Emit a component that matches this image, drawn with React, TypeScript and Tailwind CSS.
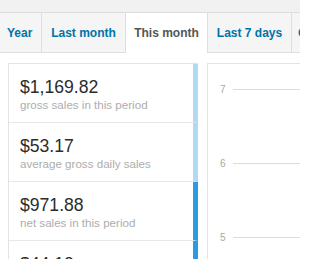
const tabs = [
  { label: "Year", w: "w-[42px]", pad: "pl-[7px]", active: false },
  { label: "Last month", w: "w-[84px]", pad: "justify-center", active: false },
  { label: "This month", w: "w-[82px]", pad: "justify-center", active: true },
  { label: "Last 7 days", w: "w-[84px]", pad: "justify-center", active: false },
  { label: "Custom:", w: "w-[90px]", pad: "pl-[6px]", active: false },
];

const legend = [
  { amount: "$1,169.82", label: "gross sales in this period", bar: "border-r-[#b1d9f1]" },
  { amount: "$53.17", label: "average gross daily sales", bar: "border-r-[#b1d9f1]" },
  { amount: "$971.88", label: "net sales in this period", bar: "border-r-[#2a9be4]" },
  { amount: "$44.13", label: "average net daily sales", bar: "border-r-[#2a9be4]" },
];

const ticks = [
  { label: "7", y: 25 },
  { label: "6", y: 99 },
  { label: "5", y: 173 },
];

export default function App() {
  return (
    <div className="h-[259px] w-[300px] overflow-hidden bg-[#f1f1f1] font-['Liberation_Sans',Arial,sans-serif]">
      <div className="mt-[12px] bg-white">
        {/* range tabs */}
        <div className="flex whitespace-nowrap border-t border-[#dcdcdc]">
          {tabs.map((t) => (
            <div
              key={t.label}
              className={`flex h-[40px] shrink-0 items-center border-r border-[#dfdfdf] text-[12px] font-bold ${t.w} ${t.pad} ${
                t.active
                  ? "bg-white text-[#555]"
                  : "border-b bg-[#f5f5f5] text-[#0073aa]"
              }`}
            >
              {t.label}
            </div>
          ))}
        </div>

        <div className="flex gap-[9px] pl-[8px] pt-[10px]">
          {/* legend */}
          <div className="w-[190px] shrink-0 border-l border-t border-[#e3e3e3]">
            {legend.map((row) => (
              <div
                key={row.amount}
                className={`border-b border-r-[5px] border-b-[#e8e8e8] pb-[11px] pl-[11px] pt-[12px] ${row.bar}`}
              >
                <div className="text-[17.6px] leading-[22px] text-[#2c2c2c]">
                  {row.amount}
                </div>
                <div className="text-[11.6px] leading-[13px] text-[#adadad]">
                  {row.label}
                </div>
              </div>
            ))}
          </div>

          {/* chart */}
          <div className="h-[220px] flex-1 border-l border-t border-[#e3e3e3]">
            <svg width="100" height="220" className="block">
              {ticks.map((t) => (
                <g key={t.label}>
                  <text
                    x="12"
                    y={t.y + 3.5}
                    fontSize="10"
                    fill="#a8a8a8"
                    fontFamily="Liberation Sans, Arial, sans-serif"
                  >
                    {t.label}
                  </text>
                  <line
                    x1="25"
                    x2="100"
                    y1={t.y + 0.5}
                    y2={t.y + 0.5}
                    stroke="#dcdcdc"
                    strokeWidth="1"
                  />
                </g>
              ))}
            </svg>
          </div>
        </div>
      </div>
    </div>
  );
}
